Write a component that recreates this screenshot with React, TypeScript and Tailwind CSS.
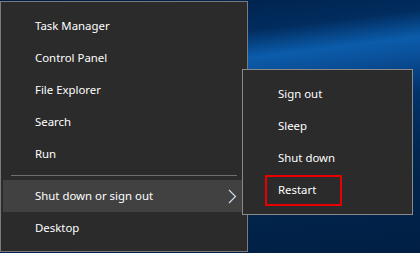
const mainItems = ['Task Manager', 'Control Panel', 'File Explorer', 'Search', 'Run']
const subItems = ['Sign out', 'Sleep', 'Shut down']

export default function App() {
  return (
    <div
      className="relative w-[420px] h-[253px] overflow-hidden bg-[#022a5a] text-white text-[11.4px]"
      style={{
        fontFamily: '"Noto Sans", "Open Sans", sans-serif',
        backgroundImage:
          'linear-gradient(173deg, #001c42 0%, #012c5e 20%, #0b5cab 29%, #0a4f98 35%, #02336b 47%, #02264f 68%, #011f44 100%)',
      }}
    >
      {/* Main menu */}
      <div className="mt-px w-[248px] h-[251px] bg-[#2b2b2b] border border-[#7a7a7a] pt-[8px]">
        {mainItems.map((label) => (
          <div key={label} className="h-8 flex items-center pl-[34px]">
            {label}
          </div>
        ))}
        <div className="mx-[10px] mt-[5px] mb-[4px] h-px bg-[#6f6f6f]" />
        <div className="mx-[2px] h-8 bg-[#414141] flex items-center pl-[32px] pr-[8px]">
          <span className="flex-1">Shut down or sign out</span>
          <svg width="9" height="15" viewBox="0 0 9 15" fill="none">
            <polyline points="1,1 7.5,7.5 1,14" stroke="#cfe0f5" strokeWidth="1.1" />
          </svg>
        </div>
        <div className="h-8 flex items-center pl-[34px]">Desktop</div>
      </div>

      {/* Submenu */}
      <div className="absolute left-[242px] top-[69px] w-[171px] h-[146px] bg-[#2b2b2b] border border-[#8a8a8a] pt-[8px]">
        {subItems.map((label) => (
          <div key={label} className="h-8 flex items-center pl-[35px]">
            {label}
          </div>
        ))}
        <div className="h-8 flex items-center pl-[22px]">
          <div className="w-[77px] h-[31px] border-2 border-[#e60000] flex items-center pl-[11px]">
            Restart
          </div>
        </div>
      </div>
    </div>
  )
}
